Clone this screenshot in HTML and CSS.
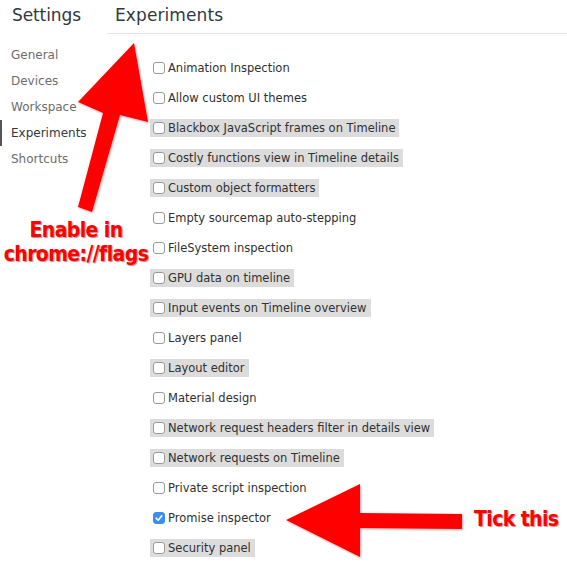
FILE: index.html
```html
<!DOCTYPE html>
<html>
<head>
<meta charset="utf-8">
<link rel="stylesheet" href="styles.css">
</head>
<body>
<div class="page">
  <aside class="sidebar">
    <h1 class="title">Settings</h1>
    <ul class="tabs">
      <li class="tab">General</li>
      <li class="tab">Devices</li>
      <li class="tab">Workspace</li>
      <li class="tab selected">Experiments</li>
      <li class="tab">Shortcuts</li>
    </ul>
  </aside>
  <main class="main">
    <h2 class="title heading">Experiments</h2>
    <div class="list">
      <div class="row"><label class="item"><span class="box"></span>Animation Inspection</label></div>
      <div class="row"><label class="item"><span class="box"></span>Allow custom UI themes</label></div>
      <div class="row"><label class="item hl"><span class="box"></span>Blackbox JavaScript frames on Timeline</label></div>
      <div class="row"><label class="item hl"><span class="box"></span>Costly functions view in Timeline details</label></div>
      <div class="row"><label class="item hl"><span class="box"></span>Custom object formatters</label></div>
      <div class="row"><label class="item"><span class="box"></span>Empty sourcemap auto-stepping</label></div>
      <div class="row"><label class="item"><span class="box"></span>FileSystem inspection</label></div>
      <div class="row"><label class="item hl"><span class="box"></span>GPU data on timeline</label></div>
      <div class="row"><label class="item hl"><span class="box"></span>Input events on Timeline overview</label></div>
      <div class="row"><label class="item"><span class="box"></span>Layers panel</label></div>
      <div class="row"><label class="item hl"><span class="box"></span>Layout editor</label></div>
      <div class="row"><label class="item"><span class="box"></span>Material design</label></div>
      <div class="row"><label class="item hl"><span class="box"></span>Network request headers filter in details view</label></div>
      <div class="row"><label class="item hl"><span class="box"></span>Network requests on Timeline</label></div>
      <div class="row"><label class="item"><span class="box"></span>Private script inspection</label></div>
      <div class="row"><label class="item"><span class="box checked"><svg viewBox="0 0 12 12" width="12" height="12"><path d="M3.2 6.2 L5.2 8.2 L8.8 3.8" fill="none" stroke="#fff" stroke-width="1.6" stroke-linecap="round" stroke-linejoin="round"/></svg></span>Promise inspector</label></div>
      <div class="row"><label class="item hl"><span class="box"></span>Security panel</label></div>
    </div>
  </main>

  <svg class="arrows" width="567" height="565" viewBox="0 0 567 565">
    <defs>
      <filter id="sh" x="-20%" y="-20%" width="140%" height="140%">
        <feDropShadow dx="1" dy="1" stdDeviation="1.2" flood-color="#000" flood-opacity="0.35"/>
      </filter>
    </defs>
    <polygon filter="url(#sh)" fill="#ff0000" points="134,43 148,122 120,115 92,212 78,207 103,113 78,102"/>
    <polygon filter="url(#sh)" fill="#ff0000" points="286,520 360,484 360,513 462,514 462,529 360,528 360,557"/>
  </svg>
  <div class="note note-flags">Enable in<br>chrome://flags</div>
  <div class="note note-tick">Tick this</div>
</div>
</body>
</html>
```

FILE: styles.css
```css
* { box-sizing: border-box; }
html, body { margin: 0; padding: 0; background: #fff; }
body {
  width: 567px;
  height: 565px;
  overflow: hidden;
  font-family: "DejaVu Sans", "Liberation Sans", sans-serif;
}
.page {
  position: relative;
  display: flex;
  width: 567px;
  height: 565px;
}
.sidebar {
  width: 107px;
  flex: none;
}
.title {
  margin: 0;
  height: 34px;
  padding-top: 5px;
  font-size: 17px;
  font-weight: normal;
  color: #303942;
  letter-spacing: 0.1px;
}
.sidebar .title { padding-left: 12px; letter-spacing: -0.1px; }
.tabs {
  list-style: none;
  margin: 0;
  padding: 8px 0 0 0;
}
.tab {
  height: 26px;
  line-height: 26px;
  padding-left: 9px;
  font-size: 12px;
  color: #6d6d6d;
  border-left: 2px solid transparent;
}
.tab.selected {
  color: #303942;
  border-left-color: #555;
}
.main {
  flex: 1;
  min-width: 0;
}
.heading {
  padding-left: 8px;
  border-bottom: 1px solid #e4e4e4;
}
.list {
  padding-left: 43px;
  padding-top: 19px;
}
.row {
  height: 30px;
  display: flex;
  align-items: center;
}
.item {
  display: inline-flex;
  align-items: center;
  height: 18px;
  padding: 0 4px 0 3px;
  font-size: 11.5px;
  color: #303030;
  white-space: nowrap;
}
.item.hl { background: #dcdcdc; }
.box {
  width: 12px;
  height: 12px;
  flex: none;
  margin-right: 3px;
  border: 1px solid #9a9a9a;
  border-radius: 3px;
  background: #fff;
  display: inline-flex;
}
.box.checked {
  background: #3a8ff5;
  border-color: #3a8ff5;
}
.box.checked svg { margin: -1px; }
.arrows {
  position: absolute;
  left: 0;
  top: 0;
  pointer-events: none;
}
.note {
  position: absolute;
  color: #ff0000;
  font-family: "DejaVu Sans", "Liberation Sans", sans-serif;
  font-stretch: condensed;
  font-weight: bold;
  font-size: 21px;
  line-height: 24px;
  letter-spacing: -0.6px;
  text-align: center;
  text-shadow: 1px 1px 1px rgba(90, 0, 0, 0.45);
  white-space: nowrap;
}
.note-flags {
  left: 0;
  top: 218px;
  width: 152px;
}
.note-tick {
  left: 474px;
  top: 507px;
}
```
